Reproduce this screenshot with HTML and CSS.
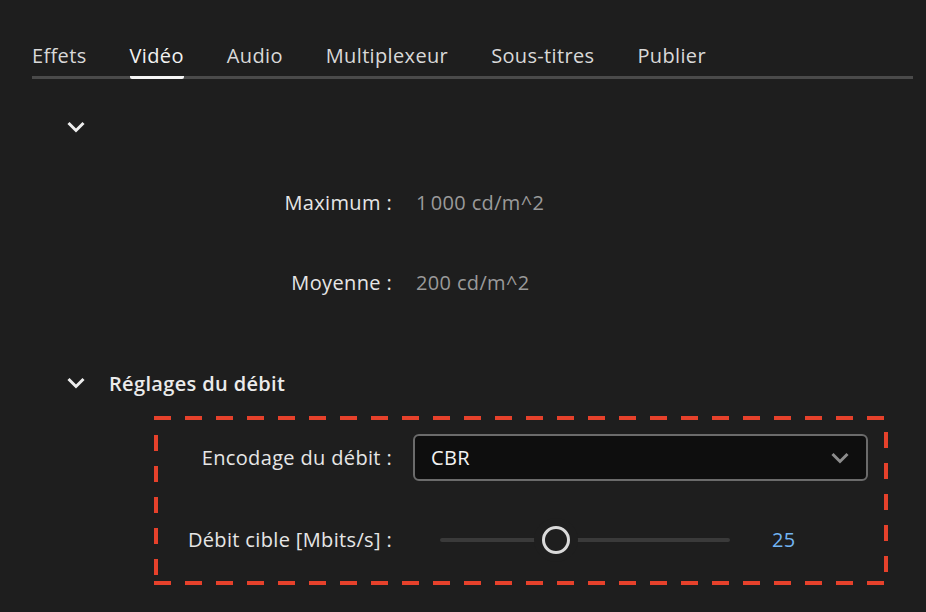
FILE: index.html
```html
<!DOCTYPE html>
<html lang="fr">
<head>
  <meta name="viewport" content="width=device-width, initial-scale=1">
  <title>Réglages vidéo</title>
  <link rel="stylesheet" href="styles.css">
</head>
<body>
  <nav class="tabs">
    <span class="tab">Effets</span>
    <span class="tab active">Vidéo</span>
    <span class="tab">Audio</span>
    <span class="tab">Multiplexeur</span>
    <span class="tab">Sous-titres</span>
    <span class="tab">Publier</span>
  </nav>

  <section class="group">
    <div class="group-head">
      <svg class="chevron" width="20" height="12" viewBox="0 0 20 12"><polyline points="2.5,2 10,9.5 17.5,2" /></svg>
    </div>
    <div class="field first">
      <span class="label">Maximum :</span>
      <span class="value">1&#8239;000 cd/m^2</span>
    </div>
    <div class="field">
      <span class="label">Moyenne :</span>
      <span class="value">200 cd/m^2</span>
    </div>
  </section>

  <section class="group">
    <div class="group-head titled">
      <svg class="chevron" width="20" height="12" viewBox="0 0 20 12"><polyline points="2.5,2 10,9.5 17.5,2" /></svg>
      <span>Réglages du débit</span>
    </div>

    <div class="bitrate-box">
      <div class="field boxed">
        <label class="label" for="encoding">Encodage du débit :</label>
        <div class="select">
          <span id="encoding">CBR</span>
          <svg width="20" height="12" viewBox="0 0 20 12"><polyline points="2.5,2 10,9.5 17.5,2" /></svg>
        </div>
      </div>
      <div class="field boxed slider-row">
        <label class="label" for="target">Débit cible [Mbits/s] :</label>
        <input type="range" id="target" min="0" max="64" step="1" value="25" oninput="updateTarget()">
        <span class="num" id="targetValue">25</span>
      </div>
    </div>
  </section>

  <script>
    function updateTarget() {
      document.getElementById('targetValue').innerText = document.getElementById('target').value;
    }
  </script>
</body>
</html>
```

FILE: styles.css
```css
body {
  margin: 0;
  background: #1e1e1e;
  color: #e6e6e6;
  font-family: "Open Sans", Lato, sans-serif;
  font-size: 20px;
  letter-spacing: 0.35px;
}
.tabs {
  display: flex;
  gap: 43px;
  width: 881px;
  margin-left: 32px;
  padding-top: 44px;
  background: linear-gradient(#4a4a4a, #4a4a4a) left bottom / 100% 3px no-repeat;
}
.tab {
  line-height: 24px;
  padding-bottom: 8px;
  border-bottom: 3px solid transparent;
  color: #d9d9d9;
}
.tab.active {
  color: #f2f2f2;
  border-bottom-color: #f5f5f5;
  border-radius: 0 0 2px 2px;
}
.group-head {
  display: flex;
  align-items: center;
  gap: 23px;
  height: 24px;
  margin-top: 36px;
  padding-left: 66px;
  font-weight: 600;
  color: #ebebeb;
}
.group-head.titled {
  margin-top: 69px;
}
.chevron polyline, .select polyline {
  fill: none;
  stroke: #ededed;
  stroke-width: 3;
}
.select polyline {
  stroke: #8c8c8c;
}
.field {
  display: grid;
  grid-template-columns: 392px auto;
  column-gap: 24px;
  align-items: center;
  height: 40px;
  margin-top: 40px;
}
.field.first {
  margin-top: 43px;
}
.label {
  text-align: right;
}
.value {
  color: #9a9a9a;
}
.bitrate-box {
  width: 734px;
  margin: 21px 0 0 154px;
  padding: 18px 0 22px;
  box-sizing: border-box;
  background:
    repeating-linear-gradient(90deg, #e6412b 0 17px, transparent 17px 31px) left top / 100% 4px no-repeat,
    repeating-linear-gradient(90deg, #e6412b 0 17px, transparent 17px 31px) left bottom / 100% 4px no-repeat,
    repeating-linear-gradient(180deg, #e6412b 0 16px, transparent 16px 31px) left 0 top 19px / 4px calc(100% - 19px) no-repeat,
    repeating-linear-gradient(180deg, #e6412b 0 16px, transparent 16px 31px) right 0 top 16px / 4px calc(100% - 20px) no-repeat;
}
.field.boxed {
  grid-template-columns: 238px 455px;
  column-gap: 21px;
  height: 47px;
  margin-top: 0;
}
.field.slider-row {
  grid-template-columns: 238px 290px auto;
  column-gap: 48px;
  margin-top: 35px;
}
.select {
  display: flex;
  align-items: center;
  justify-content: space-between;
  height: 47px;
  box-sizing: border-box;
  padding: 0 16px;
  background: #0e0e0e;
  border: 2px solid #6b6b6b;
  border-radius: 6px;
  color: #f2f2f2;
}
input[type=range] {
  -webkit-appearance: none;
  appearance: none;
  width: 290px;
  height: 28px;
  margin: 0;
  background: transparent;
}
input[type=range]::-webkit-slider-runnable-track {
  height: 4px;
  border-radius: 2px;
  background: #3a3a3a;
}
input[type=range]::-webkit-slider-thumb {
  -webkit-appearance: none;
  width: 28px;
  height: 28px;
  margin-top: -12px;
  box-sizing: border-box;
  border: 3.5px solid #dadada;
  border-radius: 50%;
  background: #1e1e1e;
  box-shadow: 0 0 0 8px #1e1e1e;
}
.num {
  color: #72b4f3;
  margin-left: -6px;
}
```
